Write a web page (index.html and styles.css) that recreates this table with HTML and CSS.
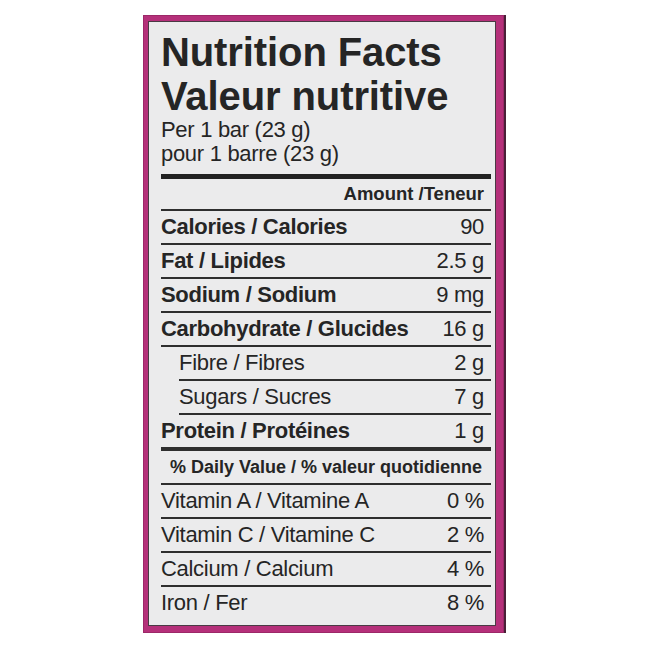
FILE: index.html
```html
<!DOCTYPE html>
<html lang="en">
<head>
<meta charset="utf-8">
<title>Nutrition Facts</title>
<link rel="stylesheet" href="styles.css">
</head>
<body>
<div class="frame">
  <div class="panel">
    <h1 class="title">Nutrition Facts<br>Valeur nutritive</h1>
    <p class="serving">Per 1 bar (23 g)<br>pour 1 barre (23 g)</p>
    <div class="rule-thick"></div>
    <div class="row head"><span class="amount">Amount /Teneur</span></div>
    <div class="row bold"><span>Calories / Calories</span><span class="val">90</span></div>
    <div class="row bold"><span>Fat / Lipides</span><span class="val">2.5 g</span></div>
    <div class="row bold"><span>Sodium / Sodium</span><span class="val">9 mg</span></div>
    <div class="row bold"><span>Carbohydrate / Glucides</span><span class="val">16 g</span></div>
    <div class="row sub"><span>Fibre / Fibres</span><span class="val">2 g</span></div>
    <div class="row sub"><span>Sugars / Sucres</span><span class="val">7 g</span></div>
    <div class="row bold thick"><span>Protein / Protéines</span><span class="val">1 g</span></div>
    <div class="row dv"><span>% Daily Value / % valeur quotidienne</span></div>
    <div class="row"><span>Vitamin A / Vitamine A</span><span class="val">0 %</span></div>
    <div class="row"><span>Vitamin C / Vitamine C</span><span class="val">2 %</span></div>
    <div class="row"><span>Calcium / Calcium</span><span class="val">4 %</span></div>
    <div class="row last"><span>Iron / Fer</span><span class="val">8 %</span></div>
  </div>
</div>
</body>
</html>
```

FILE: styles.css
```css
html, body {
  margin: 0;
  padding: 0;
  background: #ffffff;
}
body {
  width: 650px;
  height: 650px;
  padding: 15px 0 0 143px;
  box-sizing: border-box;
  font-family: "Liberation Sans", Arial, sans-serif;
  color: #252525;
}
.frame {
  width: 363px;
  height: 618px;
  box-sizing: border-box;
  background: #b5307a;
  padding: 6px 8px 7px 5px;
  border-right: 2px solid #4a2038;
  box-shadow: inset 0 0 0 1px #9c2868;
}
.panel {
  height: 100%;
  box-sizing: border-box;
  background: #ebebec;
  border: 1.5px solid #4a3a44;
  padding: 8px 4px 0 12px;
}
.title {
  margin: 0;
  font-size: 40px;
  line-height: 44px;
  font-weight: bold;
  letter-spacing: -0.1px;
}
.serving {
  margin: 0;
  font-size: 22px;
  line-height: 24px;
  letter-spacing: -0.3px;
}
.rule-thick {
  margin-top: 8px;
  height: 5px;
  background: #222;
}
.row {
  display: flex;
  justify-content: space-between;
  align-items: center;
  height: 32px;
  border-bottom: 2px solid #2e2e2e;
  font-size: 22px;
  letter-spacing: -0.3px;
  padding-right: 7px;
}
.row.bold > span:first-child {
  font-weight: bold;
}
.row.head {
  height: 30px;
  justify-content: flex-end;
  font-size: 18.5px;
  font-weight: bold;
  letter-spacing: 0;
}
.row.sub {
  margin-left: 18px;
}
.row.thick {
  border-bottom-width: 4px;
}
.row.dv {
  justify-content: center;
  font-size: 18px;
  font-weight: bold;
  letter-spacing: 0;
  padding-right: 0;
}
.row.last {
  border-bottom: none;
}
```
